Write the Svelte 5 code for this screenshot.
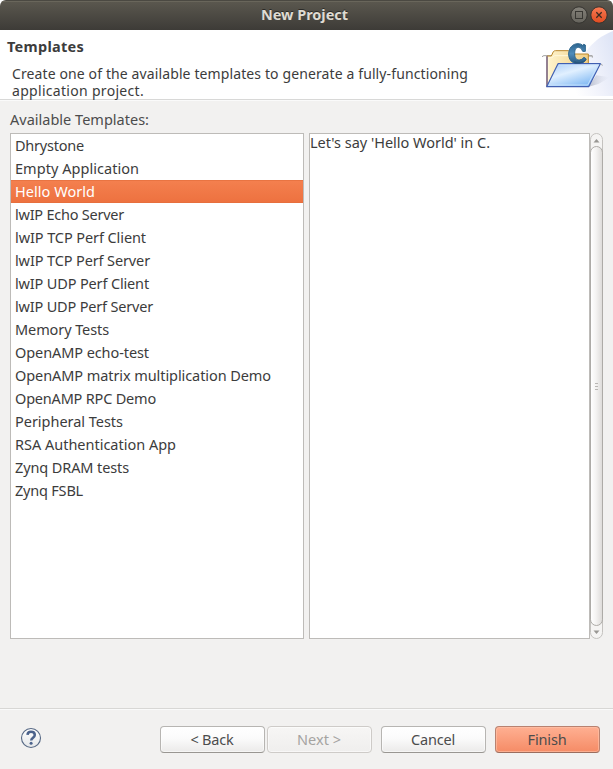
<script>
  const templates = [
    ['Dhrystone', 69],
    ['Empty Application', 124],
    ['Hello World', 80],
    ['lwIP Echo Server', 109],
    ['lwIP TCP Perf Client', 131],
    ['lwIP TCP Perf Server', 135],
    ['lwIP UDP Perf Client', 134],
    ['lwIP UDP Perf Server', 138],
    ['Memory Tests', 94],
    ['OpenAMP echo-test', 134],
    ['OpenAMP matrix multiplication Demo', 256],
    ['OpenAMP RPC Demo', 141],
    ['Peripheral Tests', 108],
    ['RSA Authentication App', 161],
    ['Zynq DRAM tests', 114],
    ['Zynq FSBL', 68]
  ];
  let selected = $state(2);

  function fit(node, width) {
    const natural = node.getBoundingClientRect().width;
    node.style.letterSpacing = (width - natural) / node.textContent.length + 'px';
  }
</script>

<div class="window">
  <header class="titlebar">
    <span class="title"><span class="label" use:fit={87}>New Project</span></span>
    <svg class="controls" width="38" height="19" viewBox="0 0 38 19">
      <defs>
        <linearGradient id="gray" x2="0" y2="1"><stop stop-color="#85827a" /><stop offset="1" stop-color="#65635c" /></linearGradient>
        <linearGradient id="red" x2="0" y2="1"><stop stop-color="#f97b54" /><stop offset="1" stop-color="#df4b20" /></linearGradient>
      </defs>
      <circle cx="9" cy="9" r="8.2" fill="url(#gray)" stroke="#34332f" />
      <rect x="5.5" y="5.5" width="7" height="7" fill="none" stroke="#383733" />
      <circle cx="29" cy="9" r="8.2" fill="url(#red)" stroke="#34332f" />
      <path d="M26.3 6.3l5.4 5.4m0-5.4l-5.4 5.4" stroke="#3b2a21" stroke-width="1.3" />
    </svg>
  </header>

  <section class="banner">
    <div class="intro">
      <h1><span class="label" use:fit={77}>Templates</span></h1>
      <p>
        <span class="label" use:fit={456}>Create one of the available templates to generate a fully-functioning</span><br />
        <span class="label" use:fit={132}>application project.</span>
      </p>
    </div>
    <svg class="art" width="80" height="66" viewBox="0 0 240 198">
      <defs>
        <linearGradient id="sky" x1="0" x2="1" y1=".7" y2=".2"><stop stop-color="#fff" /><stop offset=".5" stop-color="#f0f2fb" /><stop offset="1" stop-color="#dfe5f6" /></linearGradient>
        <linearGradient id="manila" x2="1" y2="0"><stop stop-color="#fff5cf" /><stop offset="1" stop-color="#f0cd83" /></linearGradient>
        <linearGradient id="front" x2=".7" y2="1"><stop stop-color="#a4c9f6" /><stop offset=".45" stop-color="#e1f0ff" /><stop offset="1" stop-color="#7db7f3" /></linearGradient>
        <linearGradient id="letter" x2="0" y2="1"><stop stop-color="#2d658f" /><stop offset=".5" stop-color="#508dbb" /><stop offset="1" stop-color="#28577e" /></linearGradient>
        <linearGradient id="shade" x2="1" y2="0"><stop stop-color="#949baf" /><stop offset="1" stop-color="#d5d9e8" stop-opacity="0" /></linearGradient>
      </defs>
      <path d="M112 198C128 85 174 28 240 3V198Z" fill="url(#sky)" />
      <path d="M165 171L190 136 232 142 196 162Z" fill="url(#shade)" opacity=".65" />
      <path d="M28 81q0-4 5-4h145M61 107q3-4 12-4M202 102q6 0 6 5M166 78h12v5" fill="none" stroke="#a3a3a3" stroke-width="3" />
      <path d="M42 170V78H55L61 65Q63 62 68 62H106Q112 62 114 72H166V120L60 166Z" fill="url(#manila)" stroke="#bb872c" stroke-width="3" />
      <path d="M42 170V79" stroke="#6e6195" stroke-width="4" />
      <path d="M47 160V83H55Q61 83 64 77H110" fill="none" stroke="#fff8dc" stroke-width="3" />
      <path d="M157 45V64H149Q146 52 137 52C127 52 125 61 125 71C125 84 130 90 139 90Q147 90 153 82L160 87Q153 101 135 101C117 101 107 89 107 72C107 54 119 41 135 41Q144 41 149 46L152 43Z" fill="url(#letter)" stroke="#2b648d" stroke-width="3" />
      <path d="M75 101H202L167 170H41Z" fill="url(#front)" stroke="#405fb2" stroke-width="3.5" stroke-linejoin="round" />
      <path d="M78 105H195L164 165H48" fill="none" stroke="#cae3fd" stroke-width="2.5" />
      <path d="M125 93Q139 104 159 87L157 93Q150 100 140 101H124Z" fill="#28577e" />
    </svg>
  </section>

  <main>
    <div class="caption"><span class="label" use:fit={139}>Available Templates:</span></div>
    <div class="panes">
      <div class="list" role="listbox" tabindex="-1">
        {#each templates as [name, width], i}
          <button class="row" class:selected={i === selected} role="option" aria-selected={i === selected} onclick={() => (selected = i)}>
            <span class="label" use:fit={width}>{name}</span>
          </button>
        {/each}
      </div>
      <div class="description"><span class="label" use:fit={180}>Let's say 'Hello World' in C.</span></div>
      <div class="scrollbar">
        <svg width="11" height="12"><path d="M2.5 8.5L5.5 5l3 3.5z" fill="#999793" /></svg>
        <div class="thumb"><i></i><i></i><i></i></div>
        <svg width="11" height="12"><path d="M2.5 4.5L5.5 8l3-3.5z" fill="#999793" /></svg>
      </div>
    </div>
  </main>

  <footer>
    <svg class="help" width="22" height="22" viewBox="0 0 22 22">
      <defs><linearGradient id="helpfill" x2="0" y2="1"><stop stop-color="#fff" /><stop offset="1" stop-color="#e5e7e9" /></linearGradient></defs>
      <circle cx="11" cy="11" r="9.5" fill="url(#helpfill)" stroke="#566884" stroke-width="1.1" />
      <path d="M7.5 7.8C7.7 5.7 9 4.8 11 4.8c2.2 0 3.8 1.2 3.8 3.1 0 2.8-3.6 2.7-3.6 5.6" fill="none" stroke="#4b628b" stroke-width="2.5" />
      <circle cx="11.1" cy="16.2" r="1.5" fill="#4b628b" />
    </svg>
    <div class="actions">
      <button class="btn"><span class="label" use:fit={43}>&lt; Back</span></button>
      <button class="btn disabled" disabled><span class="label" use:fit={44}>Next &gt;</span></button>
      <button class="btn cancel"><span class="label" use:fit={44}>Cancel</span></button>
      <button class="btn finish"><span class="label" use:fit={39}>Finish</span></button>
    </div>
  </footer>
</div>

<style>
  :global(body) { margin: 0; background: #fff; }
  .window {
    width: 613px; height: 769px; display: flex; flex-direction: column;
    background: #f2f1f0; color: #3c3c3c; border-radius: 6px 6px 0 0;
    font: 14.5px/18px "Noto Sans", "Open Sans", sans-serif; overflow: hidden;
  }
  .label { display: inline-block; white-space: pre; }
  .titlebar {
    height: 30px; box-sizing: border-box; display: flex; align-items: flex-start;
    padding: 5px 5px 0 39px; background: linear-gradient(#5b584f, #3d3b37);
    border-top: 1px solid #4b4942; box-shadow: inset 0 1px #69665b; flex: none;
  }
  .title { flex: 1; text-align: center; color: #dfdbd2; font-weight: 700; font-size: 14.5px; line-height: 16px; text-shadow: 0 -1px #2b2a27; }
  .controls { display: block; }
  .banner { height: 69px; flex: none; display: flex; justify-content: space-between; background: #fff; border-bottom: 1px solid #d8d8d7; }
  .intro { padding: 7px 0 0 7px; }
  h1 { margin: 0; font-size: 14.5px; line-height: 18px; font-weight: 700; }
  p { margin: 10px 0 0 5px; line-height: 17px; font-size: 14px; }
  .art { display: block; }
  main { flex: 1; padding: 9px 10px 0; border-top: 1px solid #fafafa; box-sizing: border-box; }
  .caption { height: 23px; line-height: 18px; color: #4c4c4c; }
  .panes { display: flex; height: 506px; }
  .list { width: 294px; box-sizing: border-box; border: 1px solid #bdbbb8; background: #fff; margin-right: 5px; }
  .row {
    display: flex; align-items: center; width: 100%; height: 23px; padding: 0 4px 2px;
    border: 0; background: none; color: inherit; font: inherit; text-align: left; box-sizing: border-box;
  }
  .row.selected { background: linear-gradient(#f4804f, #ed713f); color: #fff; box-shadow: inset 0 1px #e97442, inset 0 -1px #e76f3d; }
  .description { width: 281px; box-sizing: border-box; border: 1px solid #bdbbb8; background: #fff; line-height: 16px; }
  .scrollbar {
    width: 13px; box-sizing: border-box; border: 1px solid #c4c2bf; border-radius: 7px;
    display: flex; flex-direction: column; background: #f5f4f3;
  }
  .scrollbar svg { display: block; flex: none; }
  .thumb {
    flex: 1; margin: 0 -1px; border: 1px solid #adaba7; border-radius: 7px;
    background: linear-gradient(90deg, #fff, #f4f3f2 45%, #dedcda);
    display: flex; flex-direction: column; align-items: center; justify-content: center; gap: 2px;
  }
  .thumb i { width: 3px; height: 1px; background: #b9b7b4; }
  footer {
    height: 61px; box-sizing: border-box; border-top: 1px solid #d8d7d5; box-shadow: inset 0 1px #fafafa;
    display: flex; justify-content: space-between; padding: 17px 13px 0 20px;
  }
  .help { margin-top: 1px; }
  .actions { display: flex; }
  .btn {
    width: 105px; height: 27px; box-sizing: border-box; padding: 0 1px 2px 0; margin-left: 2px;
    border: 1px solid #b7b5b2; border-bottom-color: #999692; border-radius: 4px;
    background: linear-gradient(#fff, #fbfbfb 45%, #ebeae9); box-shadow: inset 0 0 0 1px #fff8;
    font: inherit; color: #4c4c4c;
  }
  .disabled { color: #a5a3a1; border-color: #cecbc8; background: linear-gradient(#f7f6f5, #efeeed); }
  .cancel, .finish { margin-left: 9px; }
  .finish { border-color: #b98270; border-bottom-color: #9b6d5e; background: linear-gradient(#ffb092, #f58b66); box-shadow: inset 0 0 0 1px #ffc4ab99; }
</style>
